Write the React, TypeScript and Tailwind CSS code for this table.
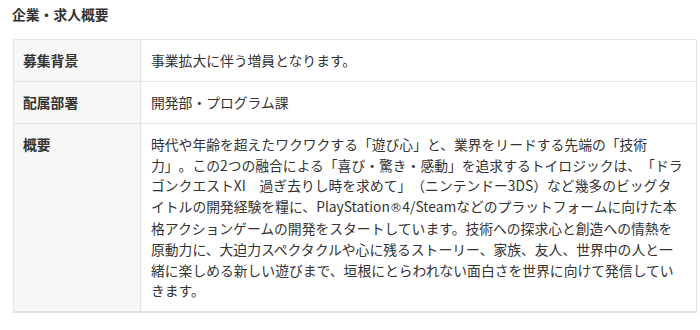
import React from "react";

const lines: React.ReactNode[] = [
  "時代や年齢を超えたワクワクする「遊び心」と、業界をリードする先端の「技術",
  "力」。この2つの融合による「喜び・驚き・感動」を追求するトイロジックは、「ドラ",
  "ゴンクエストXI　過ぎ去りし時を求めて」（ニンテンドー3DS）など幾多のビッグタ",
  <>
    イトルの開発経験を糧に、PlayStation
    <span className="font-['DejaVu_Sans',sans-serif] text-[12.5px]">®</span>
    4/Steamなどのプラットフォームに向けた本
  </>,
  "格アクションゲームの開発をスタートしています。技術への探求心と創造への情熱を",
  "原動力に、大迫力スペクタクルや心に残るストーリー、家族、友人、世界中の人と一",
  "緒に楽しめる新しい遊びまで、垣根にとらわれない面白さを世界に向けて発信してい",
  "きます。",
];

function Row({
  label,
  children,
  last,
}: {
  label: string;
  children: React.ReactNode;
  last?: boolean;
}) {
  return (
    <div
      className={
        "grid grid-cols-[127px_1fr] " + (last ? "" : "border-b border-[#e4e4e4]")
      }
    >
      <div className="border-r border-[#e4e4e4] bg-[#f7f7f7] pl-[9px] pt-[10px] pb-[10px] font-bold leading-[21px]">
        {label}
      </div>
      <div className="pl-[10px] pr-[10px] pt-[10px] pb-[10px] leading-[21px]">
        {children}
      </div>
    </div>
  );
}

export default function App() {
  return (
    <div className="w-[700px] h-[330px] overflow-hidden bg-white font-['Noto_Sans_CJK_JP','Noto_Sans',sans-serif] text-[13.8px] text-[#333333] [text-spacing-trim:space-all]">
      <div className="pl-[12px] pt-[4px] text-[13.8px] font-bold leading-[20px] text-[#333333]">
        企業・求人概要
      </div>
      <div className="ml-[13px] mt-[15px] w-[684px] border-x border-t border-b-2 border-[#e4e4e4] border-b-[#e0e0e0]">
        <Row label="募集背景">事業拡大に伴う増員となります。</Row>
        <Row label="配属部署">開発部・プログラム課</Row>
        <Row label="概要" last>
          <div className="leading-[20.6px]">
            {lines.map((l, i) => (
              <span key={i} className="block whitespace-nowrap">
                {l}
              </span>
            ))}
          </div>
        </Row>
      </div>
    </div>
  );
}
